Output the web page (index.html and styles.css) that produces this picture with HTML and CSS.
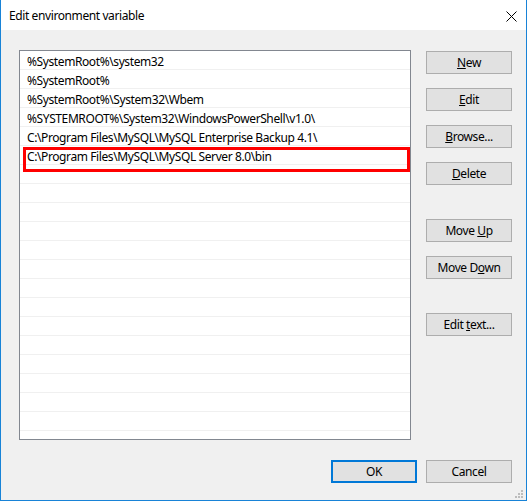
FILE: index.html
```html
<!DOCTYPE html>
<html lang="en">
<head>
    <meta charset="UTF-8">
    <title>Edit environment variable</title>
    <link rel="stylesheet" href="styles.css">
</head>
<body>
    <div class="window">
        <div class="titlebar">
            <span class="title">Edit environment variable</span>
            <svg class="close" width="11" height="11" viewBox="0 0 11 11">
                <path d="M0.5 0.5 L10.5 10.5 M10.5 0.5 L0.5 10.5" stroke="#000" stroke-width="1"/>
            </svg>
        </div>

        <div class="content">
            <div class="main">
                <div class="list">
                    <div class="row">%SystemRoot%\system32</div>
                    <div class="row">%SystemRoot%</div>
                    <div class="row">%SystemRoot%\System32\Wbem</div>
                    <div class="row">%SYSTEMROOT%\System32\WindowsPowerShell\v1.0\</div>
                    <div class="row">C:\Program Files\MySQL\MySQL Enterprise Backup 4.1\</div>
                    <div class="row">C:\Program Files\MySQL\MySQL Server 8.0\bin</div>
                    <div class="row"></div>
                    <div class="row"></div>
                    <div class="row"></div>
                    <div class="row"></div>
                    <div class="row"></div>
                    <div class="row"></div>
                    <div class="row"></div>
                    <div class="row"></div>
                    <div class="row"></div>
                    <div class="row"></div>
                    <div class="row"></div>
                    <div class="row"></div>
                    <div class="row"></div>
                    <div class="row"></div>
                    <div class="row"></div>
                    <div class="highlight"></div>
                </div>

                <div class="side-buttons">
                    <button class="btn"><u>N</u>ew</button>
                    <button class="btn"><u>E</u>dit</button>
                    <button class="btn"><u>B</u>rowse...</button>
                    <button class="btn"><u>D</u>elete</button>
                    <button class="btn group-start">Move <u>U</u>p</button>
                    <button class="btn">Move D<u>o</u>wn</button>
                    <button class="btn group-start">Edit <u>t</u>ext...</button>
                </div>
            </div>

            <div class="footer">
                <button class="btn btn-default">OK</button>
                <button class="btn">Cancel</button>
            </div>
        </div>

        <svg class="grip" width="8" height="8" viewBox="0 0 8 8">
            <rect x="6" y="0" width="2" height="2" fill="#bcbcbc"/>
            <rect x="3" y="3" width="2" height="2" fill="#bcbcbc"/>
            <rect x="6" y="3" width="2" height="2" fill="#bcbcbc"/>
            <rect x="0" y="6" width="2" height="2" fill="#bcbcbc"/>
            <rect x="3" y="6" width="2" height="2" fill="#bcbcbc"/>
            <rect x="6" y="6" width="2" height="2" fill="#bcbcbc"/>
        </svg>
    </div>
</body>
</html>
```

FILE: styles.css
```css
body {
    margin: 0;
    padding: 0;
    font-family: 'Noto Sans', 'DejaVu Sans', sans-serif;
    font-size: 12px;
    letter-spacing: -0.4px;
    color: #000;
    background: #fff;
}

.window {
    position: relative;
    width: 527px;
    height: 501px;
    box-sizing: border-box;
    border: 1px solid #1883d7;
    border-top: none;
    background: #f0f0f0;
}

.titlebar {
    height: 30px;
    background: #fff;
    display: flex;
    align-items: center;
    justify-content: space-between;
    padding: 0 9px 0 8px;
}

.title {
    line-height: 30px;
    margin-top: 1px;
}

.close {
    margin-top: 3px;
}

.content {
    padding: 20px 14px 0 18px;
}

.main {
    display: flex;
    gap: 15px;
}

.list {
    position: relative;
    width: 392px;
    height: 390px;
    box-sizing: border-box;
    border: 1px solid #828790;
    background: #fff;
    overflow: hidden;
}

.row {
    height: 16px;
    padding-top: 2px;
    line-height: 18px;
    border-bottom: 1px solid #f0f0f0;
    padding-left: 7px;
    white-space: nowrap;
}

.highlight {
    position: absolute;
    left: 3px;
    top: 96px;
    width: 387px;
    height: 25px;
    box-sizing: border-box;
    border: 3px solid #ff0000;
}

.side-buttons {
    display: flex;
    flex-direction: column;
    gap: 14px;
    padding-top: 1px;
}

.side-buttons .group-start {
    margin-top: 20px;
}

.btn {
    width: 86px;
    height: 23px;
    box-sizing: border-box;
    background: #e1e1e1;
    border: 1px solid #adadad;
    font-family: inherit;
    font-size: 12px;
    letter-spacing: -0.4px;
    color: #000;
    padding: 0;
    line-height: 19px;
}

.btn-default {
    border: 2px solid #0078d7;
}

.footer {
    display: flex;
    justify-content: flex-end;
    gap: 9px;
    margin-top: 20px;
}

.grip {
    position: absolute;
    right: 3px;
    bottom: 2px;
}
```
